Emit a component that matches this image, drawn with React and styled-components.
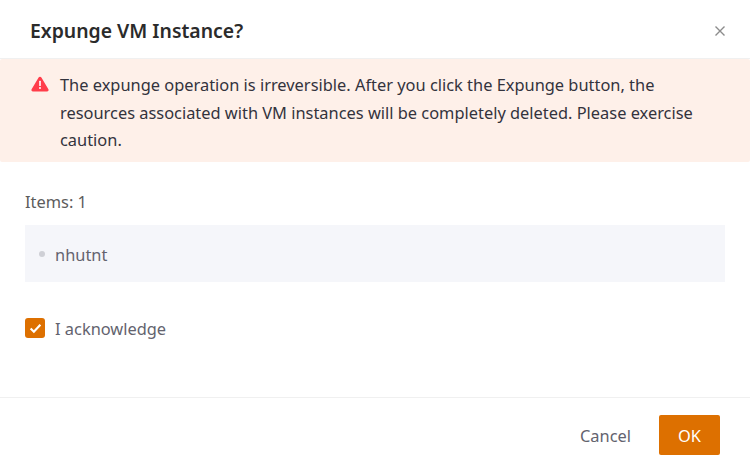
import React from 'react'
import styled, { createGlobalStyle } from 'styled-components'

const GlobalStyle = createGlobalStyle`
    html, body {
        margin: 0;
        padding: 0;
        background: #fff;
    }
    * {
        box-sizing: border-box;
    }
`

const Modal = styled.div`
    width: 750px;
    height: 472px;
    display: flex;
    flex-direction: column;
    background: #fff;
    font-family: "Noto Sans", "Open Sans", sans-serif;
    overflow: hidden;
`

const Header = styled.header`
    height: 59px;
    flex: none;
    display: flex;
    align-items: center;
    justify-content: space-between;
    padding: 3px 24px 0 30px;
    border-bottom: 1px solid #f0f0f0;

    h1 {
        margin: 0;
        font-size: 19.4px;
        font-weight: 600;
        color: #2b2b2b;
    }
`

const CloseButton = styled.button`
    border: 0;
    padding: 0;
    background: none;
    display: flex;
    width: 12px;
    height: 12px;
    color: #8c8c8c;
`

const Alert = styled.div`
    flex: none;
    height: 103px;
    display: flex;
    gap: 11px;
    padding: 12px 30px 0 31px;
    background: #fef0e9;
    border-radius: 2px;

    svg {
        flex: none;
        margin-top: 5px;
    }

    p {
        margin: 0;
        width: 650px;
        font-size: 16.4px;
        line-height: 27.6px;
        color: #33333d;
    }
`

const Body = styled.main`
    flex: 1;
    padding: 27px 25px 0;
`

const ItemCount = styled.div`
    font-size: 16.4px;
    line-height: 26px;
    color: #5c5c5c;
`

const ItemList = styled.ul`
    margin: 10px 0 0;
    padding: 1px 14px 0;
    height: 57px;
    list-style: none;
    background: #f5f6fa;
    display: flex;
    align-items: center;
`

const Item = styled.li`
    display: flex;
    align-items: center;
    gap: 10px;
    font-size: 16.4px;
    color: #63636e;

    &::before {
        content: "";
        width: 6px;
        height: 6px;
        border-radius: 50%;
        background: #cfd0d6;
    }
`

const Acknowledge = styled.label`
    margin-top: 34px;
    display: flex;
    align-items: center;
    gap: 10px;
    font-size: 16.4px;
    line-height: 26px;
    color: #63636e;
`

const CheckBox = styled.span`
    width: 20px;
    height: 20px;
    margin-top: -2px;
    border-radius: 3px;
    background: #dd7000;
    display: flex;
    align-items: center;
    justify-content: center;
`

const Footer = styled.footer`
    height: 75px;
    flex: none;
    display: flex;
    align-items: center;
    justify-content: flex-end;
    gap: 28px;
    padding: 0 30px 0 0;
    border-top: 1px solid #f0f0f0;
`

const Button = styled.button`
    border: 0;
    font-family: inherit;
    font-size: 16.4px;
    border-radius: 2px;
    height: 40px;
    padding: 0;
    background: ${props => (props.$primary ? '#dd7000' : 'transparent')};
    color: ${props => (props.$primary ? '#fff' : '#63636e')};
    width: ${props => (props.$primary ? '61px' : 'auto')};
`

const App = () => {
    return (
        <Modal>
            <GlobalStyle />
            <Header>
                <h1>Expunge VM Instance?</h1>
                <CloseButton aria-label="Close">
                    <svg width="12" height="12" viewBox="0 0 12 12" fill="none" stroke="currentColor" strokeWidth="1.4">
                        <path d="M1.5 1.5l9 9M10.5 1.5l-9 9" />
                    </svg>
                </CloseButton>
            </Header>
            <Alert>
                <svg width="18" height="16" viewBox="0 0 18 16">
                    <path d="M9 0.8c.6 0 1.1.3 1.4.8l7 11.6c.6 1-.1 2.3-1.4 2.3H2c-1.3 0-2-1.3-1.4-2.3l7-11.6C7.9 1.1 8.4.8 9 .8z" fill="#ff3d4a" />
                    <rect x="8.2" y="4.8" width="1.6" height="5.2" rx=".5" fill="#fff" />
                    <circle cx="9" cy="12" r="1" fill="#fff" />
                </svg>
                <p>The expunge operation is irreversible. After you click the Expunge button, the resources associated with VM instances will be completely deleted. Please exercise caution.</p>
            </Alert>
            <Body>
                <ItemCount>Items: 1</ItemCount>
                <ItemList>
                    <Item>nhutnt</Item>
                </ItemList>
                <Acknowledge>
                    <CheckBox>
                        <svg width="13" height="11" viewBox="0 0 12 10" fill="none" stroke="#fff" strokeWidth="2">
                            <path d="M1.5 5l3 3 6-6.5" />
                        </svg>
                    </CheckBox>
                    I acknowledge
                </Acknowledge>
            </Body>
            <Footer>
                <Button>Cancel</Button>
                <Button $primary>OK</Button>
            </Footer>
        </Modal>
    )
}

export default App
